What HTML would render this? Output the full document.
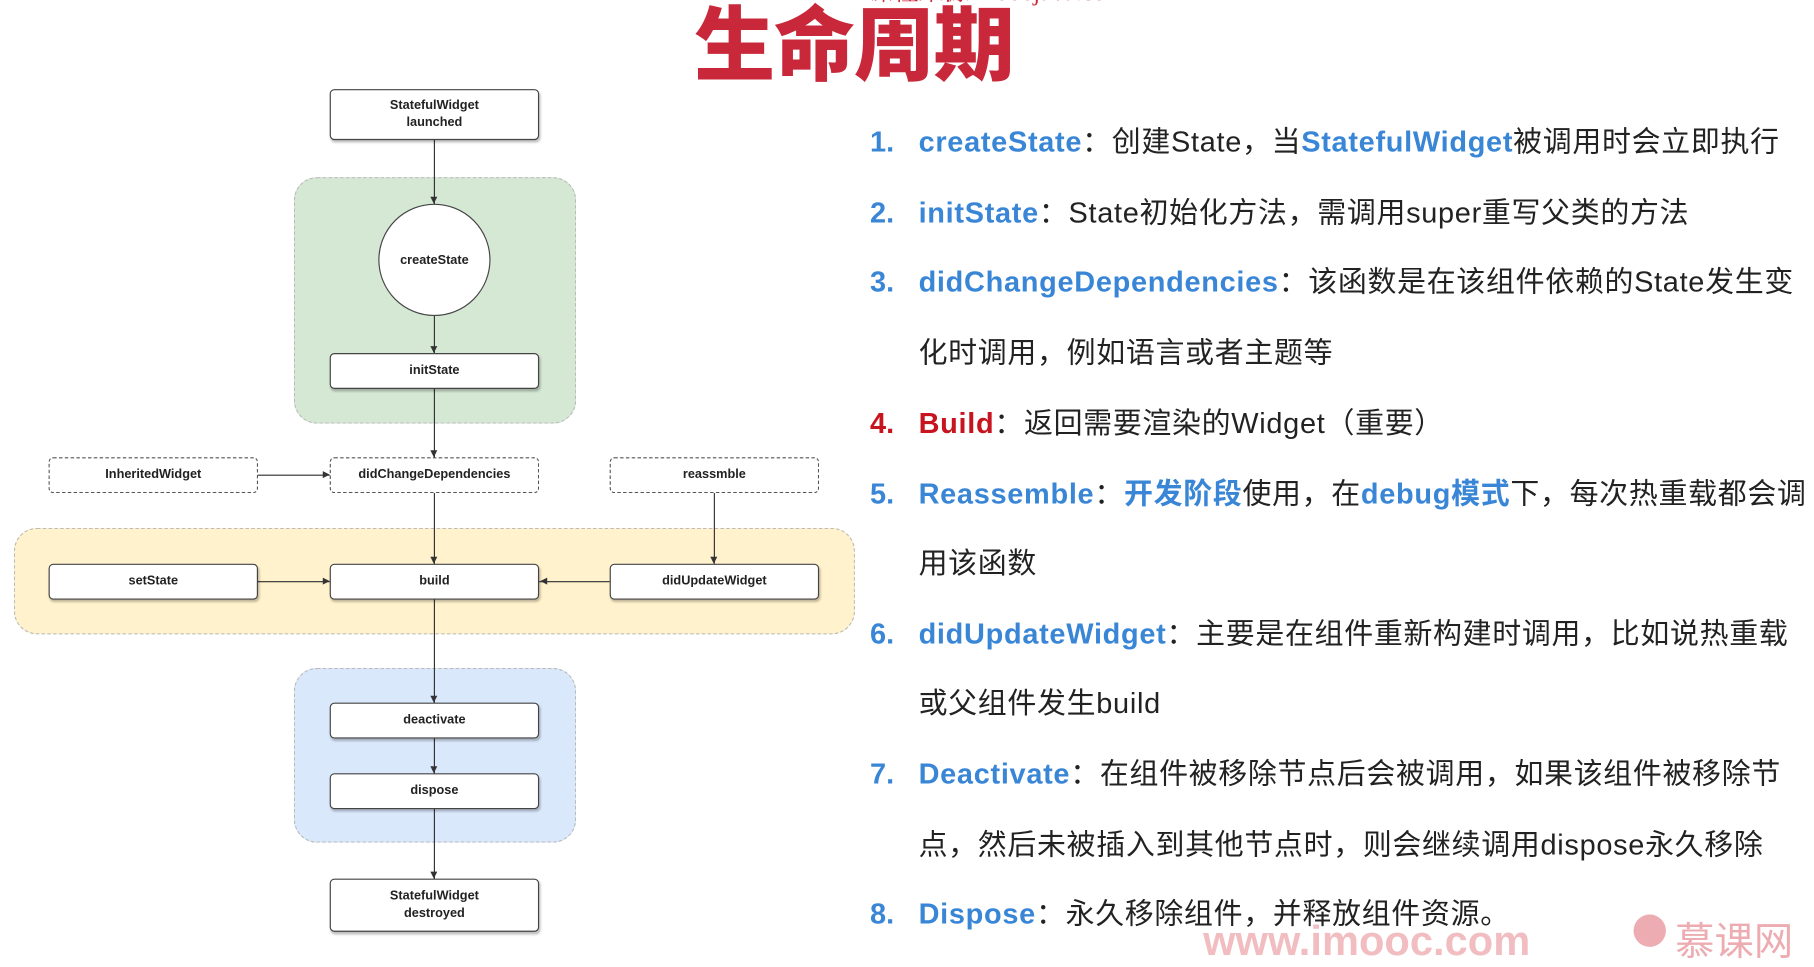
<!DOCTYPE html>
<html><head><meta charset="utf-8"><style>
html,body{margin:0;padding:0;background:#fff;overflow:hidden;width:1814px;height:933px}
#w{position:absolute;left:0;top:0;width:1568px;height:806px;transform-origin:0 0;transform:scale(1.15689,1.15757);font-family:"Liberation Sans","Noto Sans CJK SC",sans-serif}
.a{position:absolute}
.box{position:absolute;width:179px;background:#fff;border:1px solid #444;border-radius:4px;box-shadow:1px 2px 2px rgba(0,0,0,.25);display:flex;align-items:center;justify-content:center;text-align:center;font-size:11px;font-weight:bold;color:#222;line-height:15px}
.d{border:1px dashed #555;box-shadow:none}
.reg{position:absolute;border:1px dashed #bbb;border-radius:20px}
.vl{position:absolute;width:1px;background:#333}
.hl{position:absolute;height:1px;background:#333}
.ad{position:absolute;width:0;height:0;border-left:3px solid transparent;border-right:3px solid transparent;border-top:6px solid #333}
.ar{position:absolute;width:0;height:0;border-top:3px solid transparent;border-bottom:3px solid transparent;border-left:6px solid #333}
.al{position:absolute;width:0;height:0;border-top:3px solid transparent;border-bottom:3px solid transparent;border-right:6px solid #333}
.t{position:absolute;font-size:25px;letter-spacing:0.6px;color:#222;white-space:nowrap;line-height:30px}
.n{position:absolute;left:752px;font-size:25px;font-weight:bold;color:#3a86d6;line-height:30px}
.b{color:#3a86d6;font-weight:bold}
.r{color:#c8141e;font-weight:bold}
</style></head><body><div id="w">
<div class="a" style="left:750px;top:-24px;font-family:'Liberation Serif','Noto Serif CJK SC',serif;color:#c8283a;font-size:22px">课程来源：666java.com</div>
<div class="a" style="left:600px;top:-16px;font-size:70px;font-weight:900;color:#c8283a;font-family:'Noto Sans CJK SC',sans-serif;letter-spacing:-1px">生命周期</div>

<div class="reg" style="left:254px;top:153px;width:242px;height:211px;background:#d5e8d4"></div>
<div class="reg" style="left:12px;top:456px;width:725px;height:90px;background:#fff2cc"></div>
<div class="reg" style="left:254px;top:577px;width:242px;height:149px;background:#dae8fc"></div>

<div class="vl" style="left:375px;top:120px;height:640px"></div>
<div class="vl" style="left:617px;top:425px;height:62px"></div>
<div class="hl" style="left:223px;top:410px;width:62px"></div>
<div class="hl" style="left:223px;top:502px;width:62px"></div>
<div class="hl" style="left:466px;top:502px;width:61px"></div>
<div class="ad" style="left:372px;top:170px"></div>
<div class="ad" style="left:372px;top:299px"></div>
<div class="ad" style="left:372px;top:389px"></div>
<div class="ad" style="left:372px;top:481px"></div>
<div class="ad" style="left:614px;top:481px"></div>
<div class="ad" style="left:372px;top:601px"></div>
<div class="ad" style="left:372px;top:662px"></div>
<div class="ad" style="left:372px;top:753px"></div>
<div class="ar" style="left:279px;top:407px"></div>
<div class="ar" style="left:279px;top:499px"></div>
<div class="al" style="left:467px;top:499px"></div>

<div class="box" style="left:285px;top:77px;height:42px">StatefulWidget<br>launched</div>
<div class="a" style="left:327px;top:176px;width:95px;height:95px;border:1px solid #444;border-radius:50%;background:#fff;display:flex;align-items:center;justify-content:center;font-size:11px;font-weight:bold;color:#222">createState</div>
<div class="box" style="left:285px;top:305px;height:29px">initState</div>
<div class="box d" style="left:42px;top:395px;height:29px">InheritedWidget</div>
<div class="box d" style="left:285px;top:395px;height:29px">didChangeDependencies</div>
<div class="box d" style="left:527px;top:395px;height:29px">reassmble</div>
<div class="box" style="left:42px;top:487px;height:29px">setState</div>
<div class="box" style="left:285px;top:487px;height:29px">build</div>
<div class="box" style="left:527px;top:487px;height:29px">didUpdateWidget</div>
<div class="box" style="left:285px;top:607px;height:29px">deactivate</div>
<div class="box" style="left:285px;top:668px;height:29px">dispose</div>
<div class="box" style="left:285px;top:759px;height:44px">StatefulWidget<br>destroyed</div>

<div class="n" style="top:108px">1.</div><div class="t" style="left:794px;top:108px"><span class="b">createState</span>：创建State，当<span class="b">StatefulWidget</span>被调用时会立即执行</div>
<div class="n" style="top:169px">2.</div><div class="t" style="left:794px;top:169px"><span class="b">initState</span>：State初始化方法，需调用super重写父类的方法</div>
<div class="n" style="top:229px">3.</div><div class="t" style="left:794px;top:229px"><span class="b">didChangeDependencies</span>：该函数是在该组件依赖的State发生变</div>
<div class="t" style="left:794px;top:290px">化时调用，例如语言或者主题等</div>
<div class="n" style="top:351px;color:#c8141e">4.</div><div class="t" style="left:794px;top:351px"><span class="r">Build</span>：返回需要渲染的Widget（重要）</div>
<div class="n" style="top:412px">5.</div><div class="t" style="left:794px;top:412px"><span class="b">Reassemble</span>：<span class="b">开发阶段</span>使用，在<span class="b">debug模式</span>下，每次热重载都会调</div>
<div class="t" style="left:794px;top:472px">用该函数</div>
<div class="n" style="top:533px">6.</div><div class="t" style="left:794px;top:533px"><span class="b">didUpdateWidget</span>：主要是在组件重新构建时调用，比如说热重载</div>
<div class="t" style="left:794px;top:593px">或父组件发生build</div>
<div class="n" style="top:654px">7.</div><div class="t" style="left:794px;top:654px"><span class="b">Deactivate</span>：在组件被移除节点后会被调用，如果该组件被移除节</div>
<div class="t" style="left:794px;top:715px">点，然后未被插入到其他节点时，则会继续调用dispose永久移除</div>
<div class="n" style="top:775px">8.</div><div class="t" style="left:794px;top:775px"><span class="b">Dispose</span>：永久移除组件，并释放组件资源。</div>
<div class="a" style="left:1040px;top:792px;font-size:36px;font-weight:bold;color:rgba(220,90,100,.4);white-space:nowrap">www.imooc.com</div>
<div class="a" style="left:1412px;top:790px;width:28px;height:28px;border-radius:50%;background:rgba(220,90,100,.5)"></div>
<div class="a" style="left:1448px;top:786px;font-size:34px;color:rgba(220,90,100,.5);white-space:nowrap">慕课网</div>
</div></body></html>
